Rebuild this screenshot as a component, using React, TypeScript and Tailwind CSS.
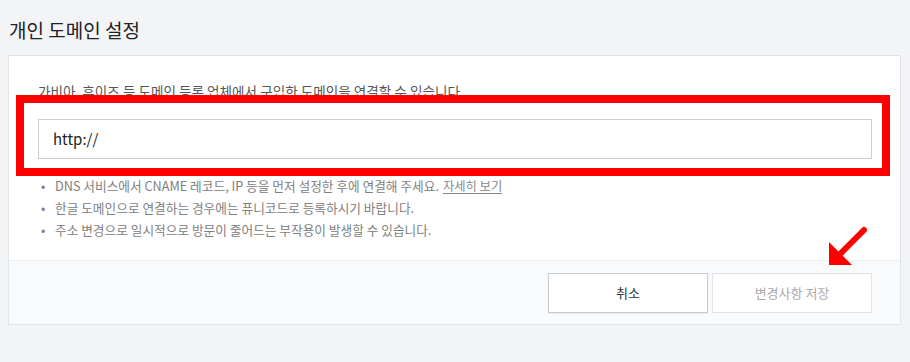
export default function App() {
  return (
    <div
      className="relative w-[910px] h-[362px] bg-[#f3f4f6] pt-[16px] overflow-hidden"
      style={{ fontFamily: '"Noto Sans CJK KR", "Noto Sans", sans-serif' }}
    >
      {/* Page title */}
      <h2 className="pl-[9px] text-[19px] leading-[28px] text-[#222]">개인 도메인 설정</h2>

      {/* Settings card */}
      <div className="ml-2 mt-[11px] w-[893px] border border-[#e1e4e9] bg-white">
        <div className="px-[29px] pt-[25px] pb-[19px]">
          <p className="text-[13.6px] leading-[20px] text-[#555]">
            가비아, 후이즈 등 도메인 등록 업체에서 구입한 도메인을 연결할 수 있습니다.
          </p>
          <div className="mt-[18px] h-[40px] w-[834px] border border-[#c8ced6] bg-white px-[14px] flex items-center">
            <span className="text-[15px] text-[#222]">http://</span>
          </div>
          <ul className="mt-[16px] text-[12.7px] leading-[22px] text-[#808080]">
            <li className="flex">
              <span className="w-[17px] pl-[3px]">•</span>
              <span>
                DNS 서비스에서 CNAME 레코드, IP 등을 먼저 설정한 후에 연결해 주세요.
                <a className="ml-[4px] text-[12.3px] text-[#888] underline underline-offset-2">자세히 보기</a>
              </span>
            </li>
            <li className="flex">
              <span className="w-[17px] pl-[3px]">•</span>
              <span>한글 도메인으로 연결하는 경우에는 퓨니코드로 등록하시기 바랍니다.</span>
            </li>
            <li className="flex">
              <span className="w-[17px] pl-[3px]">•</span>
              <span>주소 변경으로 일시적으로 방문이 줄어드는 부작용이 발생할 수 있습니다.</span>
            </li>
          </ul>
        </div>

        {/* Footer actions */}
        <div className="flex h-[64px] justify-end gap-[4px] border-t border-[#eceef1] bg-[#f9fafb] pr-[28px] pt-[12px]">
          <button className="h-[40px] w-[160px] border border-[#c5cbd3] bg-white text-[13px] text-[#333] shadow-[0_1px_0_rgba(0,0,0,0.06)]">
            취소
          </button>
          <button className="h-[40px] w-[160px] border border-[#dfe3e8] bg-white text-[13px] text-[#aaa]">
            변경사항 저장
          </button>
        </div>
      </div>

      {/* Red annotation box */}
      <div className="absolute left-[16px] top-[95px] h-[81px] w-[874px] border-[8px] border-[#ff0000]" />

      {/* Red annotation arrow */}
      <svg className="absolute left-[820px] top-[222px]" width="50" height="50" viewBox="0 0 50 50">
        <polygon points="9,20 9,43 32,43" fill="#ff0000" />
        <line x1="19" y1="33" x2="44" y2="8" stroke="#ff0000" strokeWidth="6" strokeLinecap="round" />
      </svg>
    </div>
  );
}
